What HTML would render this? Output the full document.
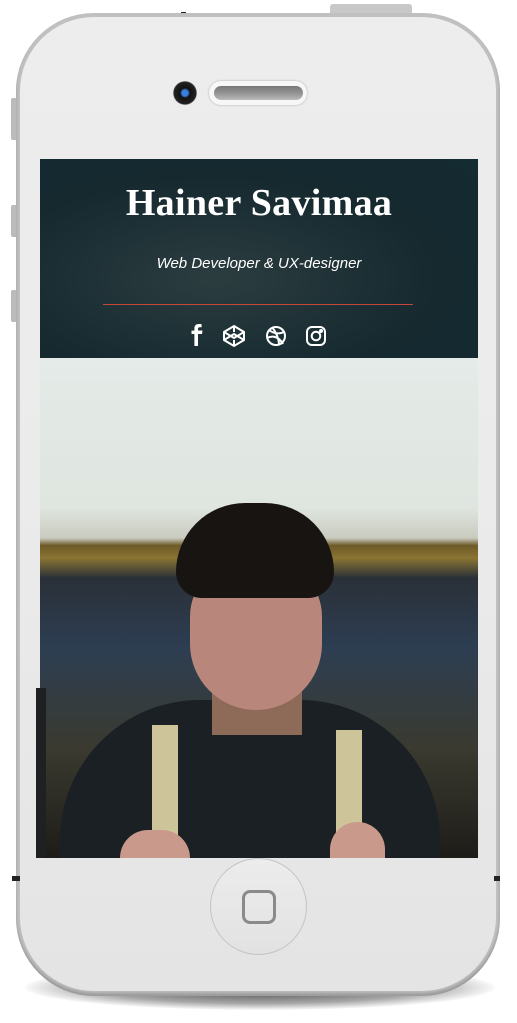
<!DOCTYPE html>
<html><head><style>
html,body{margin:0;padding:0;width:517px;height:1023px;background:#fff;overflow:hidden;position:relative;font-family:"Liberation Sans",sans-serif}
.abs{position:absolute}
</style></head><body>
<!-- shadow -->
<div class="abs" style="left:25px;top:965px;width:470px;height:45px;border-radius:50%;background:radial-gradient(ellipse at center,rgba(0,0,0,.75),rgba(0,0,0,.35) 50%,rgba(0,0,0,0) 72%)"></div>
<!-- side buttons -->
<div class="abs" style="left:11px;top:98px;width:7px;height:42px;background:#bbb;border-radius:2px"></div>
<div class="abs" style="left:11px;top:205px;width:7px;height:32px;background:#bbb;border-radius:2px"></div>
<div class="abs" style="left:11px;top:290px;width:7px;height:32px;background:#bbb;border-radius:2px"></div>
<div class="abs" style="left:330px;top:4px;width:82px;height:12px;background:#c8c8c8;border-radius:3px 3px 0 0"></div>
<div class="abs" style="left:181px;top:12px;width:5px;height:5px;background:#222"></div>
<!-- body -->
<div class="abs" style="left:16px;top:13px;width:484px;height:983px;border-radius:78px;background:#c0c0c0;box-shadow:inset 0 -3px 3px #999"></div>
<div class="abs" style="left:20px;top:17px;width:476px;height:974px;border-radius:74px;background:linear-gradient(180deg,#ededed 0%,#ebebeb 50%,#e4e4e4 100%)"></div>
<div class="abs" style="left:12px;top:876px;width:8px;height:5px;background:#222"></div>
<div class="abs" style="left:494px;top:876px;width:6px;height:5px;background:#222"></div>
<!-- camera & speaker -->
<div class="abs" style="left:173px;top:81px;width:24px;height:24px;border-radius:50%;background:radial-gradient(circle at 50% 50%,#3a7fe0 0 3px,#111 5px,#222 11px,#bbb 12px)"></div>
<div class="abs" style="left:209px;top:81px;width:98px;height:24px;border-radius:12px;background:#f7f7f7;box-shadow:0 0 2px #aaa"></div>
<div class="abs" style="left:214px;top:86px;width:89px;height:14px;border-radius:7px;background:linear-gradient(#777,#999 60%,#bbb)"></div>
<!-- header -->
<div class="abs" style="left:40px;top:159px;width:438px;height:199px;background:radial-gradient(ellipse at 40% 60%,#2c3d40,#15292f 60%,#132b31)"></div>
<div class="abs" style="left:40px;top:181px;width:438px;text-align:center;color:#fff;font-family:'Liberation Serif',serif;font-weight:bold;font-size:38px;letter-spacing:.3px">Hainer Savimaa</div>
<div class="abs" style="left:40px;top:255px;width:438px;text-align:center;color:#fff;font-style:italic;font-size:15px">Web Developer &amp; UX-designer</div>
<div class="abs" style="left:103px;top:304px;width:310px;height:1px;background:#c4473a"></div>
<svg class="abs" style="left:185px;top:322px" width="150" height="28" viewBox="0 0 150 28" fill="none" stroke="#fff" stroke-width="2">
<path d="M13 24V12h4l.5-3.5H13V7c0-1 .4-1.8 1.9-1.8h1.7V2.2c-.8-.1-1.8-.2-2.8-.2-2.8 0-4.4 1.6-4.4 4.6v2H6.5V12h2.9v12z" fill="#fff" stroke="none"/>
<path d="M49 4l10 6v8l-10 6-10-6v-8z M39 10l10 6 10-6 M49 4v6 M39 18l10-6 10 6 M49 24v-6"/>
<circle cx="91" cy="14" r="9"/><path d="M84 8c5 4 11 4 15 2 M82 16c6-3 12-1 16 6 M87 5c4 5 7 12 7 18"/>
<rect x="122" y="5" width="18" height="18" rx="5"/><circle cx="131" cy="14" r="4.3"/><circle cx="136" cy="9" r="1" fill="#fff"/>
</svg>
<!-- photo -->
<div class="abs" style="left:40px;top:358px;width:438px;height:500px;background:linear-gradient(180deg,#e4ebe8 0%,#dfe5df 30%,#c9cbbf 36%,#6e5a28 37.5%,#8a7432 40%,#2a3038 44%,#2d3e52 58%,#3a3a30 78%,#1e1c18 100%)"></div>
<div class="abs" style="left:36px;top:688px;width:10px;height:170px;background:#1e2022"></div>
<!-- person -->
<div class="abs" style="left:60px;top:700px;width:380px;height:158px;border-radius:140px 140px 0 0;background:#1b2024"></div>
<div class="abs" style="left:152px;top:725px;width:26px;height:133px;background:#cdc49a"></div>
<div class="abs" style="left:336px;top:730px;width:26px;height:128px;background:#cdc49a"></div>
<div class="abs" style="left:212px;top:680px;width:90px;height:55px;background:#8e6a58"></div>
<div class="abs" style="left:190px;top:560px;width:132px;height:150px;border-radius:60px 60px 70px 70px;background:#b8867a"></div>
<div class="abs" style="left:176px;top:503px;width:158px;height:95px;border-radius:80px 80px 30px 30px;background:#171412"></div>
<div class="abs" style="left:120px;top:830px;width:70px;height:28px;border-radius:30px 30px 0 0;background:#c99a8b"></div>
<div class="abs" style="left:330px;top:822px;width:55px;height:36px;border-radius:30px 30px 0 0;background:#c99a8b"></div>
<!-- home button -->
<div class="abs" style="left:210px;top:858px;width:97px;height:97px;border-radius:50%;background:linear-gradient(#ececec,#e2e2e2);border:1px solid #c4c4c4;box-sizing:border-box"></div>
<div class="abs" style="left:242px;top:890px;width:34px;height:34px;border-radius:8px;border:3px solid #8a8a8a;box-sizing:border-box"></div>
</body></html>
